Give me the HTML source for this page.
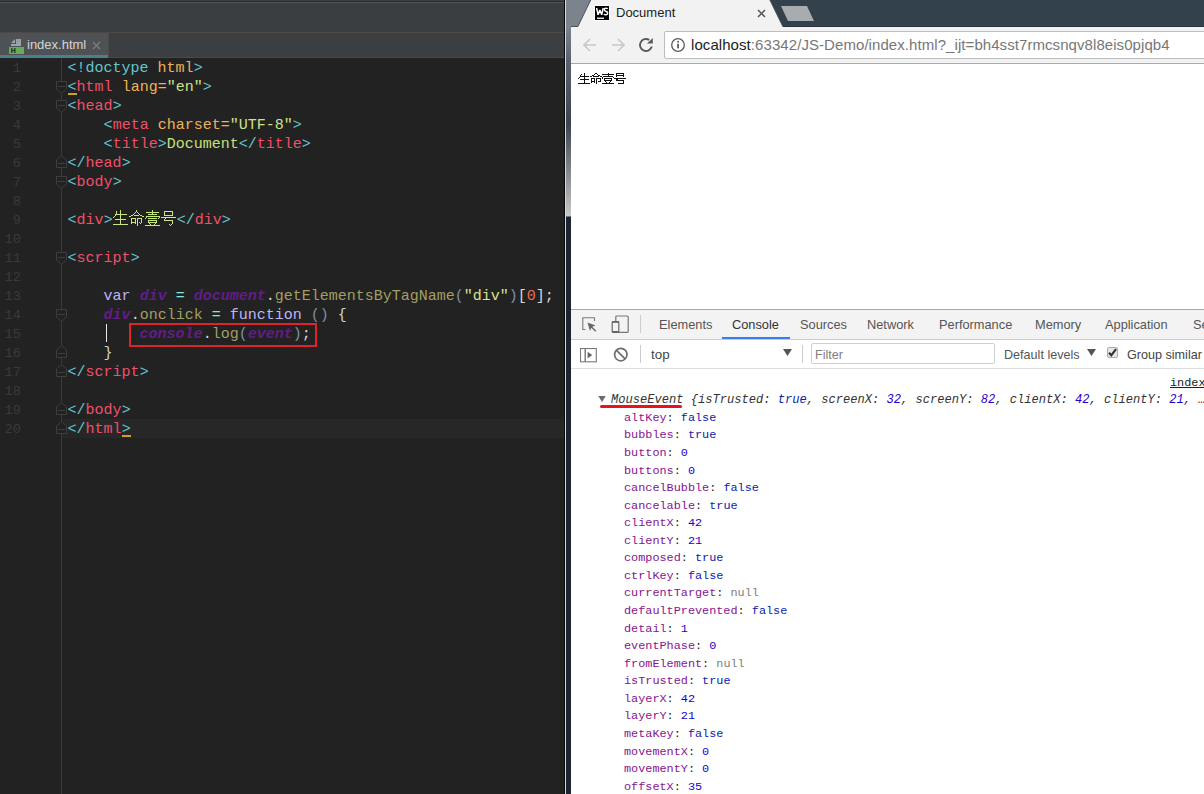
<!DOCTYPE html>
<html><head><meta charset="utf-8">
<style>
*{box-sizing:border-box}
html,body{margin:0;padding:0}
body{width:1204px;height:794px;overflow:hidden;position:relative;background:#222;font-family:"Liberation Sans",sans-serif}
.abs{position:absolute}
#ide{position:absolute;left:0;top:0;width:564px;height:794px;background:#222222;overflow:hidden}
.code{position:absolute;left:0;font-family:"Liberation Mono",monospace;font-size:15px;white-space:pre;line-height:19px}
.ln{position:absolute;left:0;width:21px;text-align:right;font-family:"Liberation Mono",monospace;font-size:13.67px;color:#373b3b;line-height:19px;white-space:pre}
.b{color:#62c6cf}.t{color:#f0506a}.a{color:#eeb35a}.v{color:#cde38a}.x{color:#c5e07c}
.kw{color:#bdb5f5}.iv{color:#631c8a;font-style:italic;font-weight:bold}.w{color:#d8d8d8}.eq{color:#8fe3d2}.ol{color:#a39f64}.pr{color:#7d8fa3}.br{color:#d9d6c0}.st{color:#d6e38f}.nm{color:#ef6b50}
#chrome{position:absolute;left:571px;top:0;width:633px;height:794px;background:#fff;overflow:hidden}
.ui{font-family:"Liberation Sans",sans-serif;font-size:13px;color:#333;white-space:pre}
.con{font-family:"Liberation Mono",monospace;font-size:11.83px;white-space:pre;position:absolute;left:53px;line-height:14px}
.p{color:#881391}.bl{color:#0d22aa}.n{color:#1c00cf}.nl{color:#808080}.k{color:#222}
</style></head><body>
<div id="ide">
  <div class="abs" style="left:0;top:0;width:564px;height:1px;background:#3d4043"></div>
  <div class="abs" style="left:0;top:1px;width:564px;height:1px;background:#2a2a2a"></div>
  <div class="abs" style="left:0;top:2px;width:564px;height:1px;background:#555555"></div>
  <div class="abs" style="left:0;top:3px;width:564px;height:29px;background:#3b3e41"></div>
  <div class="abs" style="left:0;top:32px;width:564px;height:1px;background:#4b4846"></div>
  <div class="abs" style="left:0;top:33px;width:564px;height:24px;background:#3c3f41"></div>
  <div class="abs" style="left:0;top:57px;width:564px;height:1px;background:#4b4848"></div>
  <!-- active tab -->
  <div class="abs" style="left:0;top:33px;width:108px;height:25px;background:#4e5254"></div>
  <div class="abs" style="left:0;top:55px;width:108px;height:3px;background:#4a7f8e"></div>
  <div class="abs" style="left:108px;top:33px;width:1px;height:25px;background:#4b4b4b"></div>
  <!-- file icon -->
  <svg class="abs" style="left:9px;top:39px" width="16" height="16" shape-rendering="crispEdges"><path d="M2 4L6 0V4Z" fill="#9aa5ad" shape-rendering="auto"/><rect x="7" y="0" width="5" height="5" fill="#95a0a8"/><rect x="2" y="5" width="10" height="2" fill="#9aa5ad"/><rect x="0" y="8" width="15" height="7" fill="#6aa85a"/><path d="M2.2 9h1.3v5H2.2zM5.2 9h1.3v5H5.2zM2.2 11h4.3v1.1H2.2z" fill="#263626" shape-rendering="auto"/></svg>
  <div class="abs ui" style="left:27px;top:37px;font-size:13px;color:#d4d4d4;line-height:16px">index.html</div>
  <svg class="abs" style="left:92px;top:41px" width="9" height="9"><path d="M1 1L8 8M8 1L1 8" stroke="#7b7f81" stroke-width="1.2"/></svg>
  <!-- editor -->
  <div class="abs" style="left:0;top:58px;width:564px;height:736px;background:#222222"></div>
  <div class="abs" style="left:62px;top:419px;width:502px;height:19px;background:#272727"></div>
  <div class="abs" style="left:61px;top:58px;width:1px;height:736px;background:#393939"></div>
  <div class="ln" style="top:59px">1</div><div class="ln" style="top:78px">2</div><div class="ln" style="top:97px">3</div><div class="ln" style="top:116px">4</div><div class="ln" style="top:135px">5</div><div class="ln" style="top:154px">6</div><div class="ln" style="top:173px">7</div><div class="ln" style="top:192px">8</div><div class="ln" style="top:211px">9</div><div class="ln" style="top:230px">10</div><div class="ln" style="top:249px">11</div><div class="ln" style="top:268px">12</div><div class="ln" style="top:287px">13</div><div class="ln" style="top:306px">14</div><div class="ln" style="top:325px">15</div><div class="ln" style="top:344px">16</div><div class="ln" style="top:363px">17</div><div class="ln" style="top:382px">18</div><div class="ln" style="top:401px">19</div><div class="ln" style="top:420px">20</div><svg class="abs" style="left:55px;top:81px" width="13" height="14"><path d="M1.5 0.5H11.5V8L6.5 12.5L1.5 8Z" stroke="#3e3e3e" fill="#222" stroke-width="1"/><path d="M3 5.5H10" stroke="#3e3e3e"/></svg><svg class="abs" style="left:55px;top:100px" width="13" height="14"><path d="M1.5 0.5H11.5V8L6.5 12.5L1.5 8Z" stroke="#3e3e3e" fill="#222" stroke-width="1"/><path d="M3 5.5H10" stroke="#3e3e3e"/></svg><svg class="abs" style="left:55px;top:176px" width="13" height="14"><path d="M1.5 0.5H11.5V8L6.5 12.5L1.5 8Z" stroke="#3e3e3e" fill="#222" stroke-width="1"/><path d="M3 5.5H10" stroke="#3e3e3e"/></svg><svg class="abs" style="left:55px;top:252px" width="13" height="14"><path d="M1.5 0.5H11.5V8L6.5 12.5L1.5 8Z" stroke="#3e3e3e" fill="#222" stroke-width="1"/><path d="M3 5.5H10" stroke="#3e3e3e"/></svg><svg class="abs" style="left:55px;top:309px" width="13" height="14"><path d="M1.5 0.5H11.5V8L6.5 12.5L1.5 8Z" stroke="#3e3e3e" fill="#222" stroke-width="1"/><path d="M3 5.5H10" stroke="#3e3e3e"/></svg><svg class="abs" style="left:55px;top:154px" width="13" height="14"><path d="M1.5 13.5H11.5V6L6.5 1.5L1.5 6Z" stroke="#3e3e3e" fill="#222" stroke-width="1"/><path d="M3 9.5H10" stroke="#3e3e3e"/></svg><svg class="abs" style="left:55px;top:344px" width="13" height="14"><path d="M1.5 13.5H11.5V6L6.5 1.5L1.5 6Z" stroke="#3e3e3e" fill="#222" stroke-width="1"/><path d="M3 9.5H10" stroke="#3e3e3e"/></svg><svg class="abs" style="left:55px;top:363px" width="13" height="14"><path d="M1.5 13.5H11.5V6L6.5 1.5L1.5 6Z" stroke="#3e3e3e" fill="#222" stroke-width="1"/><path d="M3 9.5H10" stroke="#3e3e3e"/></svg><svg class="abs" style="left:55px;top:401px" width="13" height="14"><path d="M1.5 13.5H11.5V6L6.5 1.5L1.5 6Z" stroke="#3e3e3e" fill="#222" stroke-width="1"/><path d="M3 9.5H10" stroke="#3e3e3e"/></svg><svg class="abs" style="left:55px;top:420px" width="13" height="14"><path d="M1.5 13.5H11.5V6L6.5 1.5L1.5 6Z" stroke="#3e3e3e" fill="#222" stroke-width="1"/><path d="M3 9.5H10" stroke="#3e3e3e"/></svg><div class="code" style="top:59px;left:67.6px"><span class="b">&lt;!doctype </span><span class="a">html</span><span class="b">&gt;</span></div><div class="code" style="top:78px;left:67.6px"><span class="b">&lt;</span><span class="t">html </span><span class="a">lang=</span><span class="v">"en"</span><span class="b">&gt;</span></div><div class="code" style="top:97px;left:67.6px"><span class="b">&lt;</span><span class="t">head</span><span class="b">&gt;</span></div><div class="code" style="top:116px;left:67.6px"><span class="w">    </span><span class="b">&lt;</span><span class="t">meta </span><span class="a">charset=</span><span class="v">"UTF-8"</span><span class="b">&gt;</span></div><div class="code" style="top:135px;left:67.6px"><span class="w">    </span><span class="b">&lt;</span><span class="t">title</span><span class="b">&gt;</span><span class="x">Document</span><span class="b">&lt;/</span><span class="t">title</span><span class="b">&gt;</span></div><div class="code" style="top:154px;left:67.6px"><span class="b">&lt;/</span><span class="t">head</span><span class="b">&gt;</span></div><div class="code" style="top:173px;left:67.6px"><span class="b">&lt;</span><span class="t">body</span><span class="b">&gt;</span></div><div class="code" style="top:211px;left:67.6px"><span class="b">&lt;</span><span class="t">div</span><span class="b">&gt;</span><span style="display:inline-block;width:64px"></span><span class="b">&lt;/</span><span class="t">div</span><span class="b">&gt;</span></div><div class="code" style="top:249px;left:67.6px"><span class="b">&lt;</span><span class="t">script</span><span class="b">&gt;</span></div><div class="code" style="top:287px;left:67.6px"><span class="w">    </span><span class="kw">var </span><span class="iv">div</span><span class="w"> </span><span class="eq">=</span><span class="w"> </span><span class="iv">document</span><span class="w">.</span><span class="ol">getElementsByTagName</span><span class="pr">(</span><span class="st">"div"</span><span class="pr">)</span><span class="w">[</span><span class="nm">0</span><span class="w">];</span></div><div class="code" style="top:306px;left:67.6px"><span class="w">    </span><span class="iv">div</span><span class="w">.</span><span class="ol">onclick </span><span class="eq">=</span><span class="kw"> function </span><span class="pr">()</span><span class="br"> {</span></div><div class="code" style="top:325px;left:67.6px"><span class="w">        </span><span class="iv">console</span><span class="w">.</span><span class="ol">log</span><span class="pr">(</span><span class="iv">event</span><span class="pr">)</span><span class="w">;</span></div><div class="code" style="top:344px;left:67.6px"><span class="w">    </span><span class="br">}</span></div><div class="code" style="top:363px;left:67.6px"><span class="b">&lt;/</span><span class="t">script</span><span class="b">&gt;</span></div><div class="code" style="top:401px;left:67.6px"><span class="b">&lt;/</span><span class="t">body</span><span class="b">&gt;</span></div><div class="code" style="top:420px;left:67.6px"><span class="b">&lt;/</span><span class="t">html</span><span class="b">&gt;</span></div><svg class="abs" style="left:112px;top:208px" width="64" height="20" shape-rendering="crispEdges"><path d="M8 2h1v1h-1zM4 3h1v1h-1zM8 3h1v1h-1zM4 4h1v1h-1zM8 4h1v1h-1zM4 5h1v1h-1zM8 5h1v1h-1zM3 6h12v1h-12zM3 7h1v1h-1zM8 7h1v1h-1zM2 8h1v1h-1zM8 8h1v1h-1zM1 9h1v1h-1zM8 9h1v1h-1zM8 10h1v1h-1zM3 11h11v1h-11zM8 12h1v1h-1zM8 13h1v1h-1zM8 14h1v1h-1zM8 15h1v1h-1zM1 16h15v1h-15zM24 2h1v1h-1zM24 3h1v1h-1zM23 4h1v1h-1zM25 4h1v1h-1zM22 5h1v1h-1zM26 5h1v1h-1zM21 6h1v1h-1zM27 6h1v1h-1zM19 7h2v1h-2zM22 7h5v1h-5zM28 7h2v1h-2zM17 8h2v1h-2zM30 8h2v1h-2zM19 10h5v1h-5zM25 10h5v1h-5zM19 11h1v1h-1zM23 11h1v1h-1zM25 11h1v1h-1zM29 11h1v1h-1zM19 12h1v1h-1zM23 12h1v1h-1zM25 12h1v1h-1zM29 12h1v1h-1zM19 13h1v1h-1zM23 13h1v1h-1zM25 13h1v1h-1zM29 13h1v1h-1zM19 14h5v1h-5zM25 14h1v1h-1zM27 14h1v1h-1zM29 14h1v1h-1zM19 15h1v1h-1zM23 15h1v1h-1zM25 15h1v1h-1zM28 15h1v1h-1zM25 16h1v1h-1zM25 17h1v1h-1zM40 2h1v1h-1zM40 3h1v1h-1zM34 4h13v1h-13zM40 5h1v1h-1zM36 6h9v1h-9zM34 8h14v1h-14zM34 9h1v1h-1zM47 9h1v1h-1zM33 10h1v1h-1zM36 10h9v1h-9zM46 10h1v1h-1zM36 12h9v1h-9zM36 13h1v1h-1zM44 13h1v1h-1zM36 14h9v1h-9zM37 15h1v1h-1zM43 15h1v1h-1zM38 16h1v1h-1zM42 16h1v1h-1zM33 17h15v1h-15zM52 3h9v1h-9zM52 4h1v1h-1zM60 4h1v1h-1zM52 5h1v1h-1zM60 5h1v1h-1zM52 6h1v1h-1zM60 6h1v1h-1zM52 7h9v1h-9zM49 9h15v1h-15zM53 10h1v1h-1zM52 11h1v1h-1zM52 12h9v1h-9zM60 13h1v1h-1zM60 14h1v1h-1zM60 15h1v1h-1zM57 16h1v1h-1zM59 16h1v1h-1zM58 17h1v1h-1z" fill="#c8e682"/></svg><div class="abs" style="left:129px;top:323px;width:188px;height:24px;border:2px solid #e0232b"></div><div class="abs" style="left:106px;top:324px;width:1px;height:18px;background:#e8e8e8"></div><div class="abs" style="left:68px;top:93px;width:9px;height:2px;background:#c9a22a"></div><div class="abs" style="left:122px;top:435px;width:9px;height:2px;background:#c9a22a"></div>
</div>
<div class="abs" style="left:564px;top:0;width:1px;height:794px;background:#0a0a0a"></div>
<div class="abs" style="left:565px;top:0;width:1px;height:794px;background:#d8d8d8"></div>
<div class="abs" style="left:566px;top:0;width:5px;height:794px;background:linear-gradient(#7b848d 0px,#7b848d 27px,#5a6470 60px,#3a4550 124px,#c8c8c8 216px,#1c2530 217px,#1c2530 794px)"></div>
<div id="chrome">
  <!-- tab strip -->
  <div class="abs" style="left:0;top:0;width:633px;height:27px;background:#33414d"></div><div class="abs" style="left:212px;top:26px;width:421px;height:1px;background:#26313c"></div>
  <div class="abs" style="left:0;top:0;width:30px;height:27px;background:#7b848d"></div><svg class="abs" style="left:0;top:0" width="260" height="28"><path d="M6.9 28V26.5L19.7 0H198.9L211.8 26.5V28Z" fill="#f2f2f2"/><path d="M0 26.5H6.9L19.7 0M198.9 0L211.8 26.5" fill="none" stroke="#4a535b" stroke-width="1"/></svg><div class="abs" style="left:210px;top:6px;width:34px;height:15px;background:#a9acaf;clip-path:polygon(0 0,26px 0,33px 15px,7px 15px)"></div>
  <!-- ws icon -->
  <div class="abs" style="left:23px;top:5px;width:16px;height:16px;background:#fff;border-radius:2px"></div>
  <svg class="abs" style="left:24px;top:6px" width="14" height="14"><rect width="14" height="14" fill="#000"/><path d="M1.6 2L3.1 8.8L4.9 4L6.7 8.8L8.2 2" stroke="#fff" stroke-width="1.5" fill="none" stroke-linejoin="bevel"/><path d="M12.6 2.9C11.8 1.9 9.2 1.8 9.2 3.7C9.2 5.5 12.7 5 12.7 7.1C12.7 9.3 9.8 9.2 8.9 8.1" stroke="#fff" stroke-width="1.5" fill="none"/><rect x="2" y="11.6" width="7" height="1.3" fill="#fff"/></svg>
  <div class="abs ui" style="left:45px;top:5px;font-size:13px;color:#222;line-height:16px">Document</div>
  <svg class="abs" style="left:186px;top:9px" width="9" height="9"><path d="M1 1L8 8M8 1L1 8" stroke="#555" stroke-width="1.5"/></svg>
  <!-- toolbar -->
  <div class="abs" style="left:0;top:27px;width:633px;height:36px;background:#f2f2f2"></div>
  <div class="abs" style="left:0;top:63px;width:633px;height:1px;background:#a9a9a9"></div>
  <svg class="abs" style="left:11px;top:37px" width="16" height="16"><path d="M14 8H2M8 2L2 8L8 14" stroke="#c8c8c8" stroke-width="1.6" fill="none"/></svg>
  <svg class="abs" style="left:39px;top:37px" width="16" height="16"><path d="M2 8H14M8 2L14 8L8 14" stroke="#c8c8c8" stroke-width="1.6" fill="none"/></svg>
  <svg class="abs" style="left:67px;top:37px" width="17" height="16"><path d="M13.8 9.55A6 6 0 1 1 11.2 2.9" stroke="#5a5a5a" stroke-width="1.9" fill="none"/><path d="M14.8 1L9 6.6H14.8Z" fill="#5a5a5a"/></svg>
  <div class="abs" style="left:93px;top:31px;width:560px;height:28px;background:#fff;border:1px solid #bdbdbd;border-radius:2px"></div>
  <svg class="abs" style="left:99px;top:37px" width="16" height="16"><circle cx="8" cy="8" r="6.3" stroke="#5a5a5a" stroke-width="1.3" fill="none"/><rect x="7.2" y="3.9" width="1.7" height="1.7" fill="#555"/><rect x="7.2" y="6.8" width="1.7" height="4.6" fill="#555"/></svg>
  <div class="abs ui" style="left:120px;top:36px;font-size:15px;line-height:18px;color:#222;letter-spacing:0.07px">localhost<span style="color:#777">:63342/JS-Demo/index.html?_ijt=bh4sst7rmcsnqv8l8eis0pjqb4</span></div>
  <!-- page -->
  <svg class="abs" style="left:5px;top:70px" width="56" height="16" shape-rendering="crispEdges"><path d="M8 3h1v1h-1zM5 4h1v1h-1zM8 4h1v1h-1zM4 5h1v1h-1zM8 5h1v1h-1zM4 6h9v1h-9zM3 7h1v1h-1zM8 7h1v1h-1zM2 8h1v1h-1zM8 8h1v1h-1zM4 9h9v1h-9zM8 10h1v1h-1zM8 11h1v1h-1zM8 12h1v1h-1zM2 13h12v1h-12zM19 3h2v1h-2zM18 4h1v1h-1zM21 4h1v1h-1zM16 5h2v1h-2zM22 5h2v1h-2zM14 6h2v1h-2zM17 6h6v1h-6zM24 6h2v1h-2zM15 8h4v1h-4zM20 8h5v1h-5zM15 9h1v1h-1zM18 9h1v1h-1zM20 9h1v1h-1zM24 9h1v1h-1zM15 10h1v1h-1zM18 10h1v1h-1zM20 10h1v1h-1zM24 10h1v1h-1zM15 11h4v1h-4zM20 11h1v1h-1zM22 11h3v1h-3zM15 12h1v1h-1zM18 12h1v1h-1zM20 12h1v1h-1zM20 13h1v1h-1zM32 3h1v1h-1zM26 4h12v1h-12zM32 5h1v1h-1zM27 6h10v1h-10zM26 7h1v1h-1zM37 7h1v1h-1zM26 8h1v1h-1zM28 8h8v1h-8zM28 9h1v1h-1zM35 9h1v1h-1zM28 10h8v1h-8zM29 11h1v1h-1zM34 11h1v1h-1zM30 12h1v1h-1zM33 12h1v1h-1zM26 13h12v1h-12zM40 3h8v1h-8zM40 4h1v1h-1zM47 4h1v1h-1zM40 5h8v1h-8zM40 6h1v1h-1zM47 6h1v1h-1zM38 8h12v1h-12zM40 9h2v1h-2zM40 10h8v1h-8zM47 11h1v1h-1zM47 12h1v1h-1zM42 13h6v1h-6z" fill="#111"/></svg>
  <!-- devtools -->
  <div class="abs" style="left:0;top:309px;width:633px;height:1px;background:#a8a8a8"></div>
  <div class="abs" style="left:0;top:310px;width:633px;height:29px;background:#f3f3f3"></div>
  <div class="abs" style="left:0;top:339px;width:633px;height:1px;background:#cccccc"></div>
  <div class="abs" style="left:151px;top:337px;width:68px;height:2px;background:#3b7df0"></div>
  <div class="abs" style="left:0;top:368px;width:633px;height:1px;background:#dddddd"></div>
  <div class="abs" style="left:69px;top:315px;width:1px;height:18px;background:#cccccc"></div>
  <div class="abs" style="left:69px;top:345px;width:1px;height:18px;background:#cccccc"></div>
  <div class="abs" style="left:231px;top:345px;width:1px;height:18px;background:#cccccc"></div>
  <div class="abs ui" style="left:88px;top:317px;line-height:16px;color:#555;font-size:12.8px">Elements</div>
  <div class="abs ui" style="left:161px;top:317px;line-height:16px;color:#333;font-size:12.8px">Console</div>
  <div class="abs ui" style="left:229px;top:317px;line-height:16px;color:#555;font-size:12.8px">Sources</div>
  <div class="abs ui" style="left:296px;top:317px;line-height:16px;color:#555;font-size:12.8px">Network</div>
  <div class="abs ui" style="left:368px;top:317px;line-height:16px;color:#555;font-size:12.8px">Performance</div>
  <div class="abs ui" style="left:464px;top:317px;line-height:16px;color:#555;font-size:12.8px">Memory</div>
  <div class="abs ui" style="left:534px;top:317px;line-height:16px;color:#555;font-size:12.8px">Application</div>
  <div class="abs ui" style="left:622px;top:317px;line-height:16px;color:#555;font-size:12.8px">Se</div>
  <div class="abs ui" style="left:80px;top:347px;line-height:16px;color:#444;font-size:13.4px">top</div>
  <div class="abs" style="left:212px;top:349px;width:9px;height:7px;background:#555;clip-path:polygon(0 0,100% 0,50% 100%)"></div>
  <div class="abs" style="left:240px;top:343px;width:184px;height:21px;border:1px solid #d0d0d0;border-radius:2px;background:#fff"></div>
  <div class="abs ui" style="left:244px;top:347px;line-height:16px;color:#808080;font-size:12.6px">Filter</div>
  <div class="abs ui" style="left:433px;top:347px;line-height:16px;color:#555;font-size:12.6px">Default levels</div>
  <div class="abs" style="left:516px;top:349px;width:9px;height:7px;background:#555;clip-path:polygon(0 0,100% 0,50% 100%)"></div>
  <div class="abs" style="left:536px;top:347px;width:11px;height:11px;border:1px solid #aaa;border-radius:2px;background:#e8e8e8"></div><svg class="abs" style="left:536px;top:347px" width="11" height="11"><path d="M2 5.8L4.3 8.3L9 2.2" stroke="#333" stroke-width="2.2" fill="none"/></svg>
  <div class="abs ui" style="left:556px;top:347px;line-height:16px;color:#444;font-size:12.6px">Group similar</div>

  <svg class="abs" style="left:10px;top:316px" width="17" height="17"><path d="M4.5 13.5H1.8V1.8H13.5V5" stroke="#7a7a7a" stroke-width="1.1" fill="none"/><path d="M6.5 6.5L14.5 9.5L11.3 10.8L15.3 14.8L14.3 15.8L10.3 11.8L9 15Z" fill="#666"/></svg>
  <svg class="abs" style="left:40px;top:315px" width="18" height="18"><rect x="4.8" y="1" width="12.4" height="16.4" rx="1" stroke="#777" stroke-width="1.2" fill="none"/><rect x="1.2" y="6.6" width="6.6" height="10.8" rx="0.8" stroke="#6a6a6a" stroke-width="1.2" fill="#f3f3f3"/><rect x="1" y="6.2" width="7" height="1.6" fill="#666"/><rect x="1" y="16" width="7" height="1.6" fill="#666"/></svg>
  <svg class="abs" style="left:9px;top:348px" width="17" height="15"><rect x="0.5" y="0.5" width="15.8" height="13.3" stroke="#777" stroke-width="1.1" fill="none"/><rect x="4.5" y="0.5" width="1.4" height="13.3" fill="#777"/><path d="M7.6 3.8L12.3 7.1L7.6 10.4Z" fill="#666"/></svg>
  <svg class="abs" style="left:42px;top:347px" width="16" height="16"><circle cx="7.8" cy="7.6" r="6.2" stroke="#6e6e6e" stroke-width="1.7" fill="none"/><path d="M3.5 3.3L12.1 11.9" stroke="#6e6e6e" stroke-width="1.7"/></svg>

    <!-- console -->
  <div class="abs con" style="left:599px;top:376px;text-decoration:underline;color:#222">index</div>
  <div class="con" style="top:411px"><span class="p">altKey</span><span class="k">: </span><span class="bl">false</span></div><div class="con" style="top:428px"><span class="p">bubbles</span><span class="k">: </span><span class="bl">true</span></div><div class="con" style="top:446px"><span class="p">button</span><span class="k">: </span><span class="n">0</span></div><div class="con" style="top:464px"><span class="p">buttons</span><span class="k">: </span><span class="n">0</span></div><div class="con" style="top:481px"><span class="p">cancelBubble</span><span class="k">: </span><span class="bl">false</span></div><div class="con" style="top:499px"><span class="p">cancelable</span><span class="k">: </span><span class="bl">true</span></div><div class="con" style="top:516px"><span class="p">clientX</span><span class="k">: </span><span class="n">42</span></div><div class="con" style="top:534px"><span class="p">clientY</span><span class="k">: </span><span class="n">21</span></div><div class="con" style="top:551px"><span class="p">composed</span><span class="k">: </span><span class="bl">true</span></div><div class="con" style="top:569px"><span class="p">ctrlKey</span><span class="k">: </span><span class="bl">false</span></div><div class="con" style="top:586px"><span class="p">currentTarget</span><span class="k">: </span><span class="nl">null</span></div><div class="con" style="top:604px"><span class="p">defaultPrevented</span><span class="k">: </span><span class="bl">false</span></div><div class="con" style="top:622px"><span class="p">detail</span><span class="k">: </span><span class="n">1</span></div><div class="con" style="top:639px"><span class="p">eventPhase</span><span class="k">: </span><span class="n">0</span></div><div class="con" style="top:657px"><span class="p">fromElement</span><span class="k">: </span><span class="nl">null</span></div><div class="con" style="top:674px"><span class="p">isTrusted</span><span class="k">: </span><span class="bl">true</span></div><div class="con" style="top:692px"><span class="p">layerX</span><span class="k">: </span><span class="n">42</span></div><div class="con" style="top:709px"><span class="p">layerY</span><span class="k">: </span><span class="n">21</span></div><div class="con" style="top:727px"><span class="p">metaKey</span><span class="k">: </span><span class="bl">false</span></div><div class="con" style="top:745px"><span class="p">movementX</span><span class="k">: </span><span class="n">0</span></div><div class="con" style="top:762px"><span class="p">movementY</span><span class="k">: </span><span class="n">0</span></div><div class="con" style="top:780px"><span class="p">offsetX</span><span class="k">: </span><span class="n">35</span></div><div class="abs" style="left:27px;top:395.5px;width:8px;height:6.5px;background:#6a6a6a;clip-path:polygon(0 0,100% 0,50% 100%)"></div><div class="con" style="left:40px;top:393px;font-style:italic;color:#333;font-size:12.08px">MouseEvent {isTrusted: <span class="bl">true</span>, screenX: <span class="n">32</span>, screenY: <span class="n">82</span>, clientX: <span class="n">42</span>, clientY: <span class="n">21</span>, …</div><div class="abs" style="left:29px;top:405px;width:82px;height:3.4px;background:#e8141c;border-radius:1.7px"></div>
</div>
</body></html>
